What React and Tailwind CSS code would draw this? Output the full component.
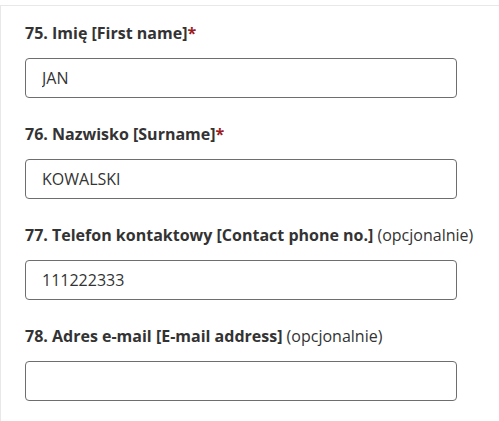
import { useState } from "react";

const fields = [
    { no: 75, label: "Imię [First name]", required: true, value: "JAN" },
    { no: 76, label: "Nazwisko [Surname]", required: true, value: "KOWALSKI" },
    { no: 77, label: "Telefon kontaktowy [Contact phone no.]", required: false, value: "111222333" },
    { no: 78, label: "Adres e-mail [E-mail address]", required: false, value: "" },
];

function Field({ no, label, required, value }) {
    const [val, setVal] = useState(value);
    return (
        <div className="pb-[25px]">
            <label className="block whitespace-nowrap text-base leading-[22px] text-[#333333]">
                <span className="font-bold">{no}. {label}</span>
                {required ? (
                    <span className="font-bold text-[#9b1c1c]">*</span>
                ) : (
                    <span> (opcjonalnie)</span>
                )}
            </label>
            <input
                className="mt-[14px] block h-10 w-[432px] rounded-[4px] border border-[#6e6e6e] bg-white px-4 text-base text-[#333333] outline-none"
                value={val}
                onChange={(e) => setVal(e.target.value)}
            />
        </div>
    );
}

export default function App() {
    return (
        <div className="h-[421px] w-[499px] overflow-hidden bg-white pt-[5px] font-['Open_Sans',sans-serif]">
            <div className="h-full border-l border-t border-[#e8e8e8] pl-6 pt-4">
                {fields.map((f) => (
                    <Field key={f.no} {...f} />
                ))}
            </div>
        </div>
    );
}
